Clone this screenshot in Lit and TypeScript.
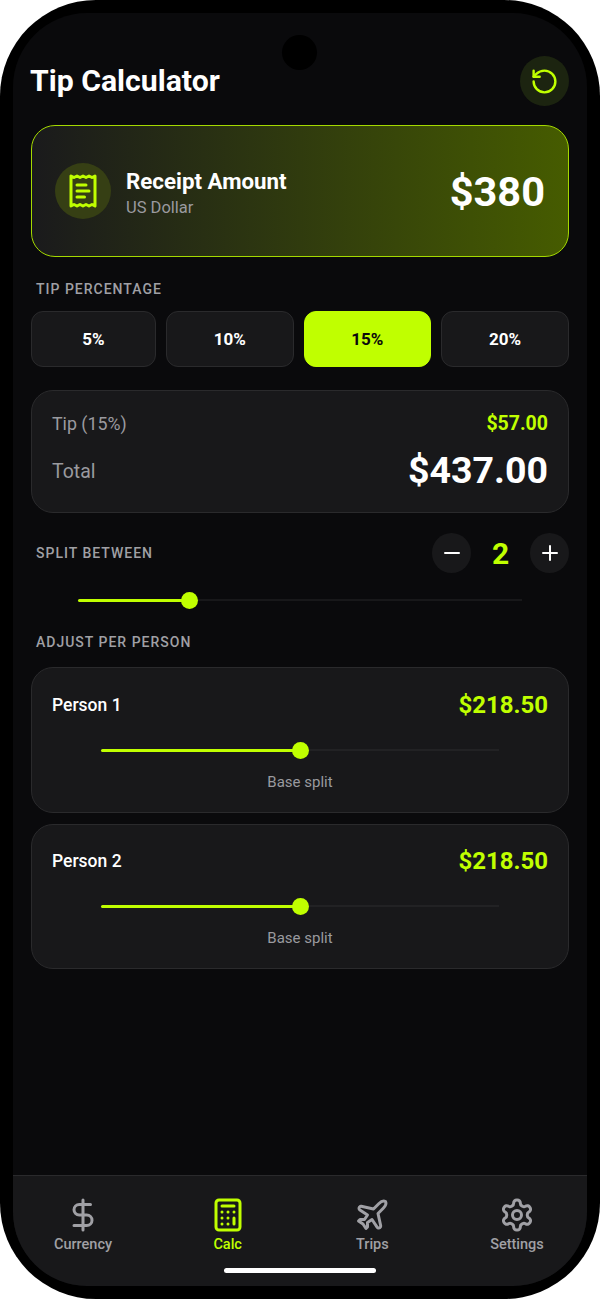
import { LitElement, html, css, svg } from "lit";
import { customElement } from "lit/decorators.js";

const ic = (size: number, sw: number, body: unknown) => html`<svg class="ic" width=${size} height=${size} viewBox="0 0 24 24" fill="none" stroke="currentColor" stroke-width=${sw} stroke-linecap="round" stroke-linejoin="round">${body}</svg>`;

const ICONS = {
  reset: svg`<path d="M3 12a9 9 0 1 0 9-9 9.75 9.75 0 0 0-6.74 2.74L3 8"/><path d="M3 3v5h5"/>`,
  receipt: svg`<path d="M4 2v20l2-1 2 1 2-1 2 1 2-1 2 1 2-1 2 1V2l-2 1-2-1-2 1-2-1-2 1-2-1-2 1Z"/><path d="M14 8H8"/><path d="M16 12H8"/><path d="M13 16H8"/>`,
  dollar: svg`<line x1="12" x2="12" y1="2" y2="22"/><path d="M17 5H9.5a3.5 3.5 0 0 0 0 7h5a3.5 3.5 0 0 1 0 7H6"/>`,
  calc: svg`<rect width="16" height="20" x="4" y="2" rx="2"/><line x1="8" x2="16" y1="6" y2="6"/><line x1="16" x2="16" y1="14" y2="18"/><path d="M16 10h.01"/><path d="M12 10h.01"/><path d="M8 10h.01"/><path d="M12 14h.01"/><path d="M8 14h.01"/><path d="M12 18h.01"/><path d="M8 18h.01"/>`,
  plane: svg`<path d="M17.8 19.2 16 11l3.5-3.5C21 6 21.5 4 21 3c-1-.5-3 0-4.5 1.5L13 8 4.8 6.2c-.5-.1-.9.1-1.1.5l-.3.5c-.2.5-.1 1 .3 1.3L9 12l-2 3H4l-1 1 3 2 2 3 1-1v-3l3-2 3.5 5.3c.3.4.8.5 1.3.3l.5-.2c.4-.3.6-.7.5-1.2z"/>`,
  gear: svg`<path d="M12.22 2h-.44a2 2 0 0 0-2 2v.18a2 2 0 0 1-1 1.73l-.43.25a2 2 0 0 1-2 0l-.15-.08a2 2 0 0 0-2.73.73l-.22.38a2 2 0 0 0 .73 2.73l.15.1a2 2 0 0 1 1 1.72v.51a2 2 0 0 1-1 1.74l-.15.09a2 2 0 0 0-.73 2.73l.22.38a2 2 0 0 0 2.73.73l.15-.08a2 2 0 0 1 2 0l.43.25a2 2 0 0 1 1 1.73V20a2 2 0 0 0 2 2h.44a2 2 0 0 0 2-2v-.18a2 2 0 0 1 1-1.73l.43-.25a2 2 0 0 1 2 0l.15.08a2 2 0 0 0 2.73-.73l.22-.39a2 2 0 0 0-.73-2.73l-.15-.08a2 2 0 0 1-1-1.74v-.5a2 2 0 0 1 1-1.74l.15-.09a2 2 0 0 0 .73-2.73l-.22-.38a2 2 0 0 0-2.73-.73l-.15.08a2 2 0 0 1-2 0l-.43-.25a2 2 0 0 1-1-1.73V4a2 2 0 0 0-2-2z"/><circle cx="12" cy="12" r="3"/>`,
};

@customElement("app-root")
export class AppRoot extends LitElement {
  static styles = css`
    :host { display: block; width: 600px; background: #fff; font-family: Roboto, "Liberation Sans", sans-serif; color: #fff; }
    * { box-sizing: border-box; }
    .ic { display: block; flex: none; }
    .phone { width: 600px; height: 1299px; background: #000; border-radius: 96px; padding: 13px; }
    .screen { position: relative; height: 1273px; background: #0a0a0c; border-radius: 74px; overflow: hidden; display: flex; flex-direction: column; }
    .notch { position: absolute; left: 269px; top: 22px; width: 35px; height: 35px; border-radius: 50%; background: #000; }
    .content { flex: 1; padding: 43px 18px 0; display: flex; flex-direction: column; }
    .header { display: flex; justify-content: space-between; align-items: center; height: 50px; }
    h1 { margin: 0 0 0 -1px; font-size: 30.2px; font-weight: 700; line-height: 50px; }
    .reset { width: 49px; height: 50px; border-radius: 50%; background: #1c2410; color: #c0ff00; display: flex; align-items: center; justify-content: center; }
    .receipt { margin-top: 19px; height: 132px; border-radius: 24px; border: 1px solid #a4d900; background: linear-gradient(90deg, #1a1a1c 0%, #465c00 100%); display: flex; align-items: center; padding: 0 23px; gap: 15px; }
    .r-icon { width: 56px; height: 56px; border-radius: 50%; background: #363f14; color: #c0ff00; display: flex; align-items: center; justify-content: center; }
    .r-text { flex: 1; display: flex; flex-direction: column; gap: 3px; padding-top: 3px; }
    .r-title { font-size: 22.3px; font-weight: 700; line-height: 28px; }
    .r-sub { font-size: 16.5px; color: #9a9a9f; line-height: 20px; }
    .r-amt { font-size: 41.5px; font-weight: 700; line-height: 50px; padding-top: 2px; }
    .label { font-size: 14px; color: #a0a0a5; letter-spacing: 1px; font-weight: 500; line-height: 18px; margin-left: 5px; }
    .l-tip { margin-top: 23px; }
    .chips { display: grid; grid-template-columns: 125fr 127.5fr 127.5fr 128fr; gap: 10px; margin-top: 13px; }
    .chip { height: 56px; border-radius: 12px; background: #18181a; border: 1px solid #2a2a2c; display: flex; align-items: center; justify-content: center; font-size: 17px; font-weight: 700; }
    .chip.on { background: #c0ff00; border-color: #c0ff00; color: #0a0a0c; }
    .card { background: #18181a; border: 1px solid #2a2a2c; border-radius: 22px; padding: 0 20px; }
    .summary { margin-top: 23px; height: 123px; display: flex; flex-direction: column; justify-content: center; gap: 11px; padding-top: 2px; }
    .row { display: flex; justify-content: space-between; align-items: center; }
    .s-l { font-size: 17.8px; color: #9a9a9f; line-height: 24px; }
    .s-l.big { font-size: 19.5px; padding-top: 3px; }
    .s-tip { font-size: 19.5px; font-weight: 700; color: #c0ff00; line-height: 24px; }
    .s-total { font-size: 37.5px; font-weight: 700; line-height: 46px; }
    .split { margin-top: 20px; display: flex; align-items: center; justify-content: space-between; height: 40px; }
    .stepper { display: flex; align-items: center; }
    .step { width: 39px; height: 40px; border-radius: 50%; background: #18181a; display: flex; align-items: center; justify-content: center; color: #fff; }
    .count { width: 59px; text-align: center; font-size: 30px; font-weight: 700; color: #c0ff00; }
    .slider { position: relative; height: 2px; background: #18181a; margin: 0 auto; }
    .slider .fill { height: 3px; margin-top: -0.5px; background: #c0ff00; border-radius: 2px; }
    .slider .thumb { position: absolute; top: 50%; width: 17px; height: 17px; margin: -8.5px 0 0 -8.5px; border-radius: 50%; background: #c0ff00; }
    .s-main { width: 444px; margin-top: 26px; }
    .l-adj { margin-top: 32px; }
    .person { height: 146px; display: flex; flex-direction: column; align-items: stretch; padding-top: 20px; }
    .p1 { margin-top: 16px; }
    .p2 { margin-top: 11px; height: 145px; padding-top: 19px; }
    .p-name { font-size: 17.5px; font-weight: 500; }
    .p-amt { font-size: 24px; font-weight: 700; color: #c0ff00; line-height: 34px; }
    .person .slider { width: 398px; background: #222224; margin-top: 27px; }
    .base { margin-top: 22px; text-align: center; font-size: 15px; color: #9a9a9f; line-height: 18px; }
    .nav { height: 111px; background: #18181a; border-top: 1px solid #2a2a2c; display: flex; flex-direction: column; }
    .tabs { display: grid; grid-template-columns: 70px 70px 70px 70px; justify-content: space-between; padding: 0 35px 0 35px; margin-top: 21px; }
    .tab { display: flex; flex-direction: column; align-items: center; color: #a0a0a5; font-size: 14.5px; font-weight: 500; line-height: 18px; gap: 3px; }
    .tab.on { color: #c0ff00; }
    .home { align-self: center; width: 152px; height: 5px; border-radius: 3px; background: #fff; margin-top: 14px; }
  `;

  private slider(cls: string, pct: number) {
    return html`<div class="slider ${cls}"><div class="fill" style="width:${pct}%"></div><div class="thumb" style="left:${pct}%"></div></div>`;
  }

  private person(name: string, cls: string) {
    return html`<div class="card person ${cls}">
      <div class="row"><span class="p-name">${name}</span><span class="p-amt">$218.50</span></div>
      ${this.slider("", 50)}
      <div class="base">Base split</div>
    </div>`;
  }

  render() {
    const tabs = [["Currency", ICONS.dollar, false], ["Calc", ICONS.calc, true], ["Trips", ICONS.plane, false], ["Settings", ICONS.gear, false]] as const;
    return html`<div class="phone"><div class="screen">
      <div class="notch"></div>
      <div class="content">
        <div class="header"><h1>Tip Calculator</h1><div class="reset">${ic(29, 2, ICONS.reset)}</div></div>
        <div class="receipt">
          <div class="r-icon">${ic(36, 2, ICONS.receipt)}</div>
          <div class="r-text"><div class="r-title">Receipt Amount</div><div class="r-sub">US Dollar</div></div>
          <div class="r-amt">$380</div>
        </div>
        <div class="label l-tip">TIP PERCENTAGE</div>
        <div class="chips">
          ${["5%", "10%", "15%", "20%"].map((t) => html`<div class="chip ${t === "15%" ? "on" : ""}">${t}</div>`)}
        </div>
        <div class="card summary">
          <div class="row"><span class="s-l">Tip (15%)</span><span class="s-tip">$57.00</span></div>
          <div class="row"><span class="s-l big">Total</span><span class="s-total">$437.00</span></div>
        </div>
        <div class="split">
          <div class="label">SPLIT BETWEEN</div>
          <div class="stepper">
            <div class="step">${ic(24, 2, svg`<path d="M5 12h14"/>`)}</div>
            <div class="count">2</div>
            <div class="step">${ic(24, 2, svg`<path d="M5 12h14"/><path d="M12 5v14"/>`)}</div>
          </div>
        </div>
        ${this.slider("s-main", 25)}
        <div class="label l-adj">ADJUST PER PERSON</div>
        ${this.person("Person 1", "p1")}
        ${this.person("Person 2", "p2")}
      </div>
      <div class="nav">
        <div class="tabs">
          ${tabs.map(([l, i, on]) => html`<div class="tab ${on ? "on" : ""}">${ic(36, 2, i)}<span>${l}</span></div>`)}
        </div>
        <div class="home"></div>
      </div>
    </div></div>`;
  }
}
